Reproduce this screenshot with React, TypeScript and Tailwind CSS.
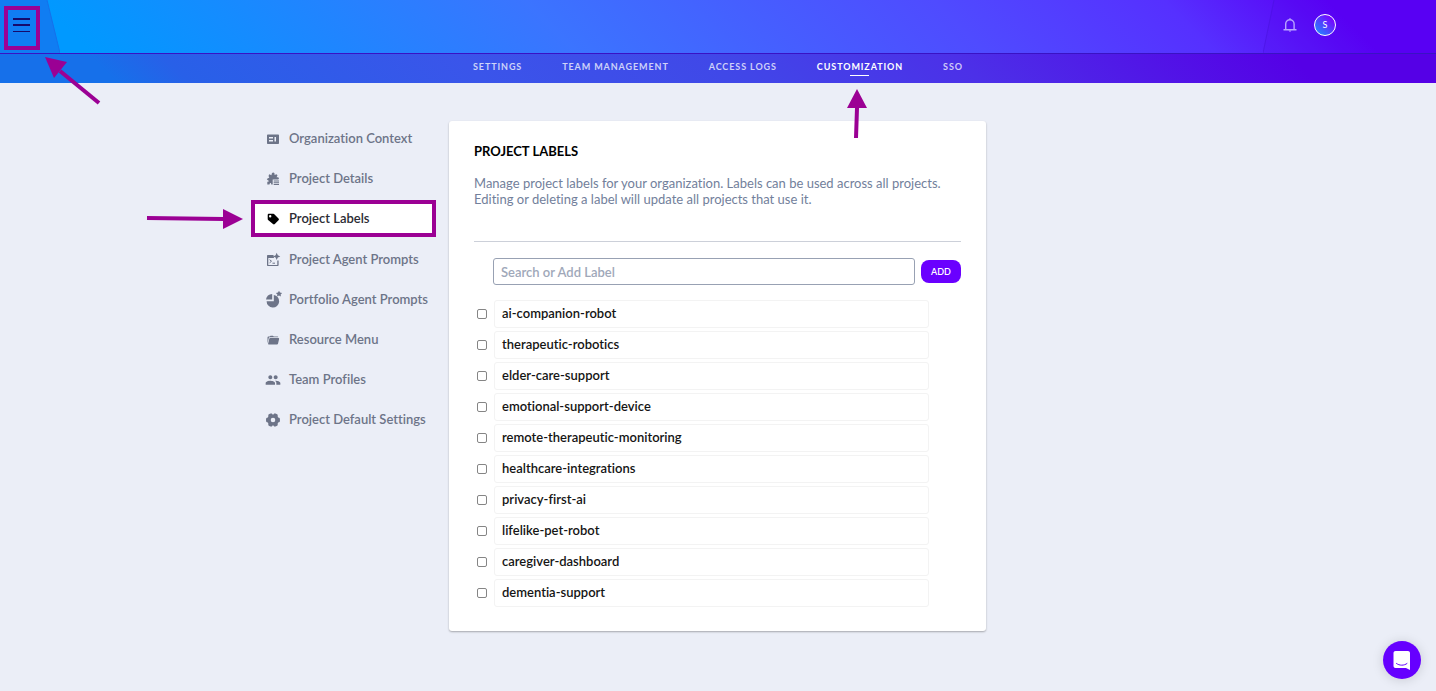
import { useState } from "react";
import type { ReactNode } from "react";
import { MdGroup } from "react-icons/md";

const tabs = ["Settings", "Team Management", "Access Logs", "Customization", "SSO"];

const labels = [
  "ai-companion-robot",
  "therapeutic-robotics",
  "elder-care-support",
  "emotional-support-device",
  "remote-therapeutic-monitoring",
  "healthcare-integrations",
  "privacy-first-ai",
  "lifelike-pet-robot",
  "caregiver-dashboard",
  "dementia-support",
];

const Icon = ({ children }: { children: ReactNode }) => (
  <svg viewBox="0 0 16 16" className="h-4 w-4 overflow-visible" fill="currentColor" aria-hidden="true">
    {children}
  </svg>
);

const menu = [
  {
    name: "Organization Context",
    icon: (
      <Icon>
        <path
          fillRule="evenodd"
          d="M3 3.500h10c.6 0 1 .4 1 1v7.500c0 .6-.4 1-1 1H3c-.6 0-1-.4-1-1V4.500c0-.6.4-1 1-1zM4 6v1.500h4V6zm0 3v1.500h4V9zM9.500 6v4.500H11V6z"
        />
      </Icon>
    ),
  },
  {
    name: "Project Details",
    icon: (
      <Icon>
        <path d="M4.300 3.200l2.200 1c.1-1.700.6-2.700 1.700-2.700s1.700 1 1.300 2.500l2-.7 1 .9-.9 2c1.600-.2 2.300.4 2.300 1.200s-.6 1.100-1.400 1.200H7.700v5H6.200c.1-2-1.500-2-1.700 0H2.300v-2.800c1.700.2 2-1.700.2-1.900L1.800 8l2.600-1.400c-.9-.9-1-2.300-.1-3.400z" />
        <path d="M8.700 9.400H14v1.100H8.700zM8.700 11.200H14v1.100H8.700zM8.700 13H14v1.100H8.700z" />
      </Icon>
    ),
  },
  {
    name: "Project Labels",
    icon: (
      <Icon>
        <path
          fillRule="evenodd"
          d="M2.700 4c0-.7.500-1.200 1.200-1.200h4.500c.4 0 .7.200.9.400l4.200 4.300c.6.600.6 1.200 0 1.800l-3.700 3.800c-.6.600-1.200.6-1.800 0L3.100 9c-.3-.3-.4-.6-.4-1zm2.500.1a1.200 1.200 0 1 0 0 2.400 1.200 1.200 0 0 0 0-2.400z"
        />
      </Icon>
    ),
  },
  {
    name: "Project Agent Prompts",
    icon: (
      <Icon>
        <path d="M3 3h5.500l.5 3H3.300v6.900h9V8.500h1.300v4.600c0 .6-.4 1-1 1H3c-.6 0-1-.4-1-1V4c0-.6.4-1 1-1z" />
        <path d="M11.700.8l1.100 2.500 2.500 1.100-2.500 1.100L11.700 8l-1.100-2.500-2.500-1.100 2.500-1.100z" />
        <path d="M4.600 7.700l1.900 1.500-1.900 1.600M7.500 11.200h2.500" fill="none" stroke="currentColor" />
      </Icon>
    ),
  },
  {
    name: "Portfolio Agent Prompts",
    icon: (
      <Icon>
        <path d="M7.200 2v5.500H1A6.500 6.500 0 0 1 7.200 2z" />
        <path d="M8.800 3a6.300 6.300 0 1 1-7.200 6.200h7.200z" />
        <path d="M14-1.300l1 1.900 2.100.3-1.500 1.500.4 2.100-2-1-2 1 .4-2.100L10.900.9 13 .6z" />
      </Icon>
    ),
  },
  {
    name: "Resource Menu",
    icon: (
      <Icon>
        <path d="M2.500 11.500V5.400c0-.5.400-.8.900-.8h1.200l1-.9h2.300l.9.900h3.800c.4 0 .7.300.7.700H4.800c-.7 0-.9.300-1.100.9z" />
        <path d="M5.200 6.100h8.300c.5 0 .7.400.6.800l-1.100 4.800c-.1.500-.5.800-1 .8H3.700c-.5 0-.7-.4-.6-.8l1.200-4.900c.1-.4.400-.7.900-.7z" />
      </Icon>
    ),
  },
  {
    name: "Team Profiles",
    icon: <MdGroup className="h-4 w-4" />,
  },
  {
    name: "Project Default Settings",
    icon: (
      <Icon>
        <path
          fillRule="evenodd"
          d="M5.600 1.500h1.300l.6 1h1l.6-1h1.300c.9.200 1.700.7 2.300 1.300v1.800l.5.900 1.500.5c.4 1.300.4 2.700 0 4l-1.500.5-.5.900v1.800c-.6.600-1.400 1.100-2.300 1.300H9.100l-.6-1h-1l-.6 1H5.600c-.9-.2-1.700-.7-2.300-1.300v-1.800l-.5-.9L1.300 10c-.4-1.300-.4-2.700 0-4l1.500-.5.500-.9V2.800c.6-.6 1.400-1.100 2.300-1.300zM8 5.700a2.300 2.300 0 1 0 0 4.600 2.300 2.300 0 0 0 0-4.600z"
        />
      </Icon>
    ),
  },
];

const Header = () => (
  <header className="relative bg-[linear-gradient(45deg,#0099ff_8%,#3b74ff_40%,#4f4bff_67%,#5630ff_82%,#5a00f5_93%)]">
    <svg
      className="absolute top-0 left-0 h-[53px] w-[60px]"
      viewBox="0 0 60 53"
      aria-hidden="true"
    >
      <path d="M0 0h47l13 53H0z" fill="#1b6bea" fillOpacity=".6" />
      <path d="M47 0l13 53" stroke="#1670ea" />
    </svg>
    <svg
      className="absolute top-0 right-0 h-[53px] w-[173px]"
      viewBox="0 0 173 53"
      aria-hidden="true"
    >
      <path d="M11 0h162v53H0z" fill="#5000e0" fillOpacity=".1" />
      <path d="M11 0L0 53" stroke="#4a12dd" strokeOpacity=".6" />
    </svg>
    <div className="relative flex h-[53px] items-start justify-between pr-[100px] pl-1">
      <button
        aria-label="Open menu"
        className="mt-[6px] flex h-11 w-9 items-start justify-center border-4 border-[#9b0094] pt-2 text-[#160a6b]"
      >
        <svg viewBox="0 0 18 16" className="h-4 w-[18px]" fill="currentColor" aria-hidden="true">
          <path d="M0 0h17v2H0zM0 6h17v2H0zM0 13h17v1H0z" />
        </svg>
      </button>
      <div className="mt-[14px] flex items-center gap-4">
        <button aria-label="Notifications" className="text-[#b9a5ff]">
          <svg
            viewBox="0 0 16 16"
            className="h-4 w-4"
            fill="none"
            stroke="currentColor"
            strokeWidth="1.400"
            aria-hidden="true"
          >
            <path d="M3.700 12.500V7a4.200 4.200 0 0 1 8.400 0v5.500M1.500 12.700h13M8 1.200v1.500" />
            <path d="M6.500 13.400h3L8 15z" fill="currentColor" stroke="none" />
          </svg>
        </button>
        <button className="flex h-[22px] w-[22px] items-center justify-center rounded-full border border-white bg-[linear-gradient(45deg,#2a7cff_15%,#7a00ff_85%)] text-[9px] text-white">
          S
        </button>
      </div>
    </div>
    <nav className="relative flex h-[30px] justify-center gap-10 border-t border-[#3a12c4] bg-[linear-gradient(45deg,#1670ea_8%,#2860e8_13%,#3a55ea_33%,#4048e8_50%,#4c30e8_67%,#5500e6_90%)] pt-[6px]">
      {tabs.map((tab) => (
        <a
          key={tab}
          href="#"
          className={`flex flex-col items-center text-[9px] leading-[14px] font-bold tracking-widest uppercase ${
            tab === "Customization" ? "text-white" : "text-white/75"
          }`}
        >
          {tab}
          {tab === "Customization" && <span className="mt-px h-px w-[19px] bg-white" />}
        </a>
      ))}
    </nav>
  </header>
);

const Sidebar = () => (
  <nav className="-mt-[2px] w-[185px] justify-self-end">
    {menu.map(({ name, icon }) => {
      const active = name === "Project Labels";
      return (
        <a
          key={name}
          href="#"
          className={`flex items-center gap-2 text-[13px] font-semibold whitespace-nowrap ${
            active
              ? "mt-px mb-[3px] h-[37px] border-4 border-[#9b0094] bg-white px-[10px] text-[#2b2b33]"
              : "h-10 px-[14px] text-[#6d7488]"
          }`}
        >
          <span className={active ? "text-black" : ""}>{icon}</span>
          {name}
        </a>
      );
    })}
  </nav>
);

const LabelsCard = () => {
  const [search, setSearch] = useState("");

  return (
    <main className="rounded-[3px] bg-white px-[25px] pb-6 shadow-[0_1px_2px_rgba(0,0,0,0.3)]">
      <h1 className="pt-5 text-[13px] leading-5 font-bold text-black uppercase">
        Project Labels
      </h1>
      <p className="mt-[14px] border-b border-[#ccd0d9] pb-[34px] text-[13px] leading-4 text-[#72809b]">
        Manage project labels for your organization. Labels can be used across all projects. Editing
        or deleting a label will update all projects that use it.
      </p>
      <form className="mt-4 flex items-center gap-[6px] pl-[19px]">
        <input
          type="text"
          aria-label="Search or Add Label"
          placeholder="Search or Add Label"
          value={search}
          onChange={(e) => setSearch(e.target.value)}
          className="h-[27px] min-w-0 flex-1 rounded-[3px] border border-[#98a1b3] px-[7px] text-[13px] font-semibold placeholder:text-[#a0a8b9]"
        />
        <button
          type="button"
          className="h-[23px] w-10 rounded-lg bg-[#6a00ff] text-[9px] font-semibold text-white"
        >
          ADD
        </button>
      </form>
      <ul className="mt-[15px] flex flex-col gap-[3px] pr-8 pl-[3px]">
        {labels.map((label) => (
          <li key={label} className="flex items-center gap-[7px]">
            <input
              type="checkbox"
              id={label}
              className="h-[10px] w-[10px] appearance-none rounded-[2px] border border-[#858585] bg-white checked:bg-[#6a00ff]"
            />
            <label
              htmlFor={label}
              className="h-7 flex-1 rounded-[3px] border border-[#f3f3f3] px-[7px] text-[13px] leading-6 font-semibold text-[#151515]"
            >
              {label}
            </label>
          </li>
        ))}
      </ul>
    </main>
  );
};

// pointers drawn over the page
const Arrows = () => (
  <svg
    className="pointer-events-none absolute top-0 left-0 h-[240px] w-[260px]"
    viewBox="0 0 260 240"
    fill="#9b0094"
    stroke="#9b0094"
    aria-hidden="true"
  >
    <path d="M99 103L60 71" strokeWidth="4" />
    <path d="M45 57l22 5-13 16z" stroke="none" />
    <path d="M147 218l77 1" strokeWidth="4" />
    <path d="M243 219l-20-10v20z" stroke="none" />
  </svg>
);

const App = () => (
  <div className="relative min-h-screen bg-[#ebeef7] font-[Lato,'Liberation_Sans',sans-serif] [font-variant-ligatures:none]">
    <Header />
    <div className="grid grid-cols-[1fr_minmax(0,537px)_1fr] items-start gap-x-[13px] pt-[38px] pr-px pb-10">
      <div className="grid">
        <Sidebar />
      </div>
      <LabelsCard />
    </div>
    <Arrows />
    <svg
      className="pointer-events-none absolute top-[89px] left-1/2 ml-[128px] h-[49px] w-[22px]"
      viewBox="0 0 22 49"
      fill="#9b0094"
      aria-hidden="true"
    >
      <path d="M11 0l10 19h-8l-1 30H8l1-30H1z" />
    </svg>
    <button
      aria-label="Open chat"
      className="fixed right-[15px] bottom-3 flex h-[38px] w-[38px] items-center justify-center rounded-full bg-[#6600ff] shadow-[0_1px_12px_rgba(0,0,0,0.15)]"
    >
      <svg viewBox="0 0 18 20" className="h-5 w-[18px]" aria-hidden="true">
        <path d="M2.500 1h12.500c1.100 0 2 .9 2 2v17l-4-2H2.500c-1.100 0-2-.9-2-2V3c0-1.100.9-2 2-2z" fill="#fff" />
        <path d="M3.500 13.500c3 2.300 7.500 2.300 10.500 0" fill="none" stroke="#6600ff" strokeLinecap="round" />
      </svg>
    </button>
  </div>
);

export default App;
